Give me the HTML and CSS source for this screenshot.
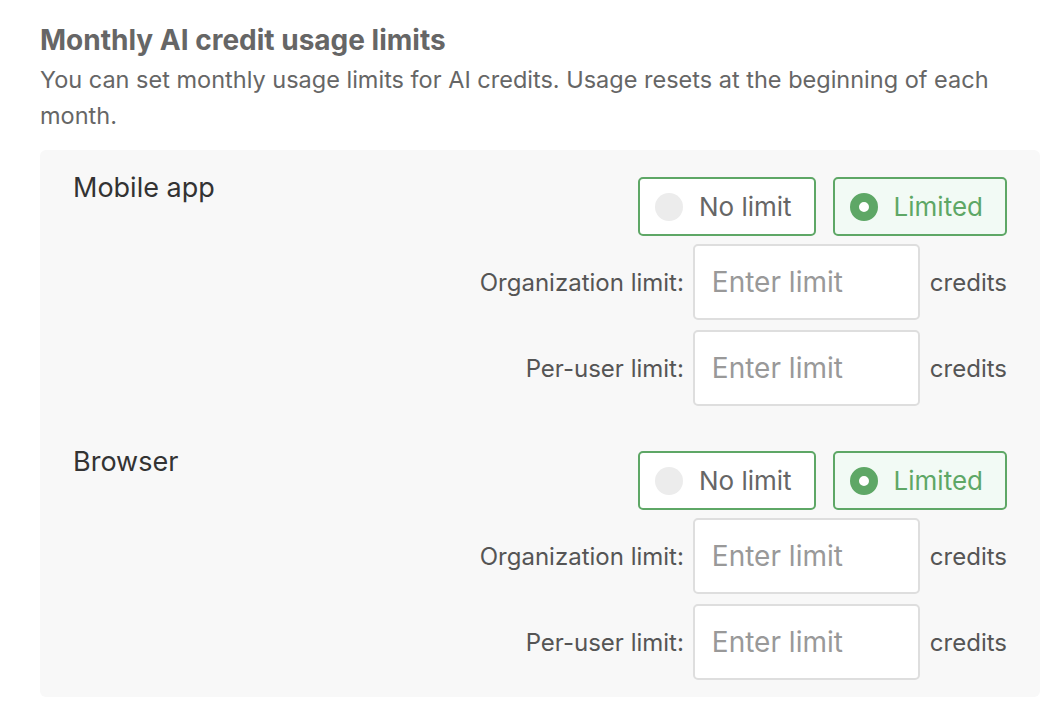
FILE: index.html
```html
<!DOCTYPE html>
<html lang="en">
	<head>
		<title>AI credit usage limits</title>
		<link rel="stylesheet" href="styles.css">
	</head>

	<body>
		<div class="container">
			<h2 class="title">Monthly AI credit usage limits</h2>
			<p class="desc">You can set monthly usage limits for AI credits. Usage resets at the beginning of each month.</p>

			<div class="panel">
				<div class="section">
					<div class="section-name">Mobile app</div>
					<div class="controls">
						<div class="choices">
							<label class="choice"><span class="radio"></span>No limit</label>
							<label class="choice active"><span class="radio"></span>Limited</label>
						</div>
						<div class="field">
							<span class="field-label">Organization limit:</span>
							<input type="text" placeholder="Enter limit">
							<span class="unit">credits</span>
						</div>
						<div class="field">
							<span class="field-label">Per-user limit:</span>
							<input type="text" placeholder="Enter limit">
							<span class="unit">credits</span>
						</div>
					</div>
				</div>

				<div class="section">
					<div class="section-name">Browser</div>
					<div class="controls">
						<div class="choices">
							<label class="choice"><span class="radio"></span>No limit</label>
							<label class="choice active"><span class="radio"></span>Limited</label>
						</div>
						<div class="field">
							<span class="field-label">Organization limit:</span>
							<input type="text" placeholder="Enter limit">
							<span class="unit">credits</span>
						</div>
						<div class="field">
							<span class="field-label">Per-user limit:</span>
							<input type="text" placeholder="Enter limit">
							<span class="unit">credits</span>
						</div>
					</div>
				</div>
			</div>
		</div>
	</body>
</html>
```

FILE: styles.css
```css
/* general styling */
* {
	box-sizing: border-box;
	margin: 0;
	padding: 0;
}

body {
	background: #fff;
	font-family: Inter, "Noto Sans", sans-serif;
	padding: 24px 24px 0 40px;
}

.container {
	width: 1000px;
}

.title {
	color: #666;
	font-size: 28px;
	font-weight: 700;
	line-height: 32px;
}

.desc {
	color: #666;
	font-size: 23.5px;
	line-height: 36px;
	margin-top: 6px;
}

.panel {
	background: #f8f8f8;
	border-radius: 6px;
	display: flex;
	flex-direction: column;
	gap: 2px;
	margin-top: 16px;
	padding-bottom: 1px;
}

.section {
	display: flex;
	justify-content: space-between;
	padding: 27px 33px 16px;
}

.section-name {
	color: #333;
	font-size: 27px;
	line-height: 22px;
}

.controls {
	align-items: flex-end;
	display: flex;
	flex-direction: column;
	gap: 8px;
}

/* radio choices */
.choices {
	display: flex;
	gap: 17px;
}

.choice {
	align-items: center;
	background: #fff;
	border: 2px solid #5ea766;
	border-radius: 5px;
	color: #666;
	display: flex;
	font-size: 26px;
	gap: 16px;
	height: 59px;
	padding: 0 22px 0 15px;
}

.choice.active {
	background: #f2faf5;
	color: #5ea766;
}

.radio {
	background: #ececec;
	border-radius: 50%;
	height: 28px;
	width: 28px;
}

.active .radio {
	background: #fff;
	border: 9px solid #5ea766;
}

/* limit fields */
.field {
	align-items: center;
	display: flex;
	gap: 9px;
}

.field + .field {
	margin-top: 2px;
}

.field-label {
	color: #555;
	font-size: 24px;
}

.field input {
	background: #fff;
	border: 2px solid #dedede;
	border-radius: 5px;
	color: #333;
	font-family: inherit;
	font-size: 28px;
	height: 76px;
	padding: 0 17px;
	width: 227px;
}

.field input::placeholder {
	color: #999;
}

.unit {
	color: #555;
	font-size: 24px;
	margin-left: 1px;
}
```
